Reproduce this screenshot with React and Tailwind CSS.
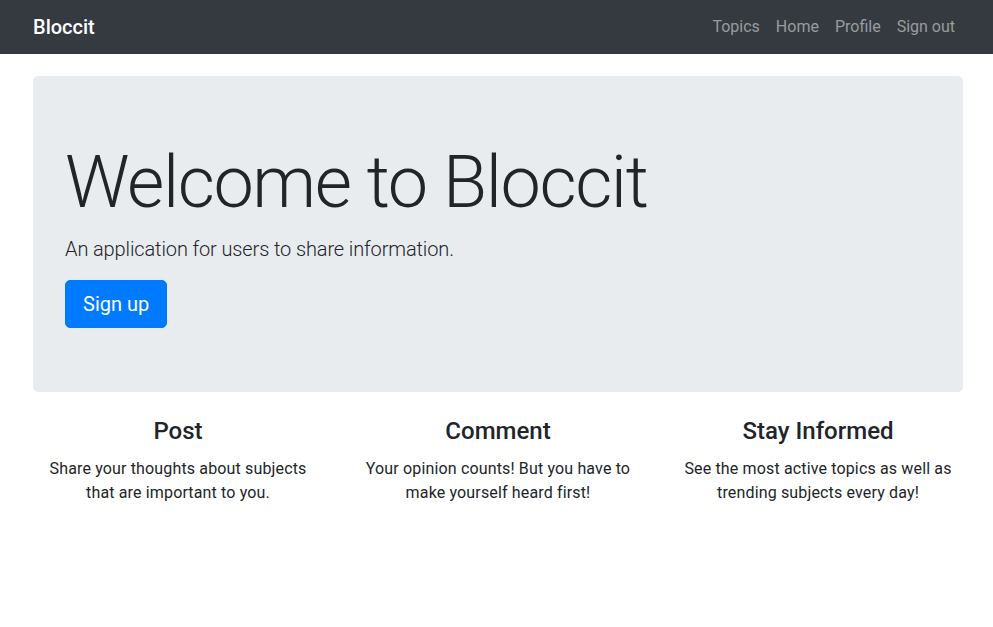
export default function App() {
  const font = { fontFamily: 'Roboto, "Liberation Sans", sans-serif' };
  const cols = [
    { t: "Post", d: ["Share your thoughts about subjects", "that are important to you."] },
    { t: "Comment", d: ["Your opinion counts! But you have to", "make yourself heard first!"] },
    { t: "Stay Informed", d: ["See the most active topics as well as", "trending subjects every day!"] },
  ];
  return (
    <div className="min-h-[627px] bg-white text-[#212529]" style={font}>
      <nav className="h-[54px] bg-[#343a40] flex items-center justify-between pl-[33px] pr-[30px]">
        <span className="text-[20px] font-medium text-white leading-none">Bloccit</span>
        <div className="flex items-center">
          {["Topics", "Home", "Profile", "Sign out"].map((l) => (
            <a key={l} className="px-2 text-[16px] text-[#999c9f]">{l}</a>
          ))}
        </div>
      </nav>
      <div className="pl-[33px] pr-[30px] pt-[22px]">
        <div className="bg-[#e9ecef] rounded-[5px] px-8 py-16 mb-[25px]">
          <h1 className="text-[72px] font-light leading-[1.2] mb-2 tracking-[-1.4px]">Welcome to Bloccit</h1>
          <p className="text-[20px] font-light leading-[1.5] mb-4 tracking-[-0.12px]">An application for users to share information.</p>
          <button className="bg-[#007bff] text-white text-[20px] leading-[1.5] px-[17px] py-2 rounded-[5px] border border-[#007bff]">Sign up</button>
        </div>
        <div className="grid grid-cols-3 -mx-[15px]">
          {cols.map((c) => (
            <div key={c.t} className="px-[15px] text-center">
              <h4 className="text-[24px] font-medium leading-[1.2] mb-[11px]">{c.t}</h4>
              <p className="text-[16px] leading-[24px] tracking-[0.15px]">{c.d[0]}<br />{c.d[1]}</p>
            </div>
          ))}
        </div>
      </div>
    </div>
  );
}
